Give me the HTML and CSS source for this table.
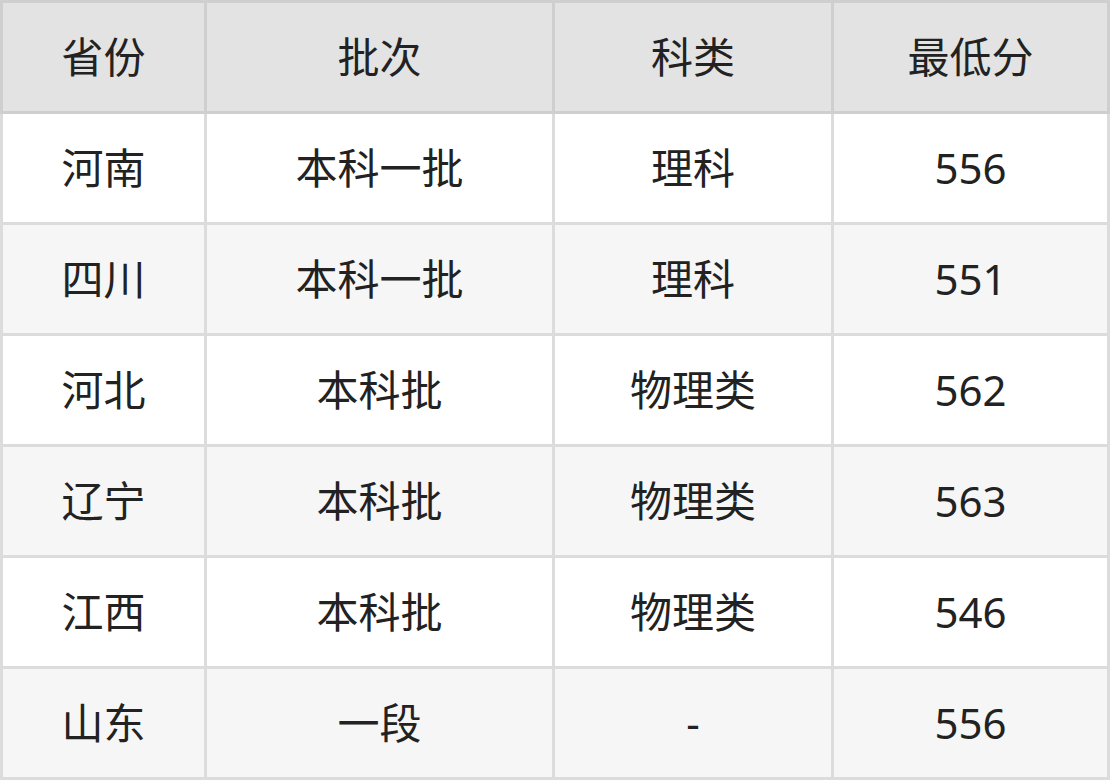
FILE: index.html
```html
<!DOCTYPE html>
<html lang="zh">
<head>
<meta charset="utf-8">
<link rel="stylesheet" href="styles.css">
</head>
<body>
<table class="score-table">
  <colgroup>
    <col class="c1"><col class="c2"><col class="c3"><col class="c4">
  </colgroup>
  <thead>
    <tr><th>省份</th><th>批次</th><th>科类</th><th>最低分</th></tr>
  </thead>
  <tbody>
    <tr><td>河南</td><td>本科一批</td><td>理科</td><td>556</td></tr>
    <tr><td>四川</td><td>本科一批</td><td>理科</td><td>551</td></tr>
    <tr><td>河北</td><td>本科批</td><td>物理类</td><td>562</td></tr>
    <tr><td>辽宁</td><td>本科批</td><td>物理类</td><td>563</td></tr>
    <tr><td>江西</td><td>本科批</td><td>物理类</td><td>546</td></tr>
    <tr><td>山东</td><td>一段</td><td>-</td><td>556</td></tr>
  </tbody>
</table>
</body>
</html>
```
FILE: styles.css
```css
html, body {
  margin: 0;
  padding: 0;
  background: #ffffff;
}
.score-table {
  width: 1110px;
  table-layout: fixed;
  border-collapse: separate;
  border-spacing: 0;
  font-family: "Noto Sans", "Noto Sans CJK SC", sans-serif;
  font-size: 42px;
  color: #222222;
}
.c1 { width: 207px; }
.c2 { width: 348px; }
.c3 { width: 279px; }
.c4 { width: 276px; }
.score-table th,
.score-table td {
  padding: 0;
  text-align: center;
  vertical-align: middle;
  font-weight: normal;
  line-height: 1;
  box-sizing: border-box;
}
.score-table th {
  height: 114px;
  background: #e3e3e3;
  border-top: 3px solid #cfcfcf;
  border-right: 3px solid #cfcfcf;
  border-bottom: 3px solid #cfcfcf;
}
.score-table th:first-child {
  border-left: 3px solid #cfcfcf;
}
.score-table td {
  height: 111px;
  background: #ffffff;
  border-right: 3px solid #dcdcdc;
  border-bottom: 3px solid #dcdcdc;
}
.score-table td:first-child {
  border-left: 3px solid #dcdcdc;
}
.score-table tbody tr:nth-child(even) td {
  background: #f6f6f6;
}
```
